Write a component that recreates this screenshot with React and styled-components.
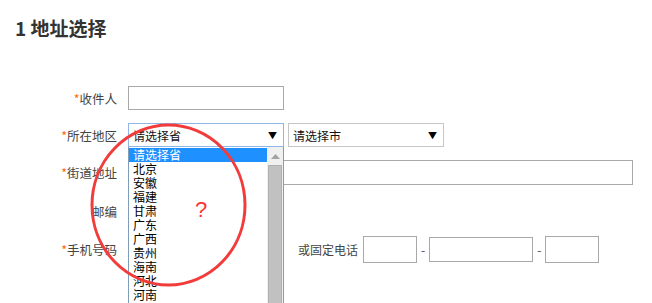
import React from "react";
import styled, { createGlobalStyle } from "styled-components";

const GlobalStyle = createGlobalStyle`
  html, body {
    margin: 0;
    padding: 0;
    background: #fff;
    overflow: hidden;
  }
  body {
    font-family: "Noto Sans CJK SC", "Liberation Sans", sans-serif;
    color: #333;
  }
`;

const provinces = [
  "请选择省",
  "北京",
  "安徽",
  "福建",
  "甘肃",
  "广东",
  "广西",
  "贵州",
  "海南",
  "河北",
  "河南",
];

const Page = styled.div`
  position: relative;
  height: 303px;
  overflow: hidden;
  padding: 0 0 0 15px;
`;

const Title = styled.h3`
  margin: 0;
  padding-top: 15px;
  height: 30px;
  font-size: 19px;
  line-height: 26px;
  font-weight: bold;
  color: #333;
`;

const Form = styled.div`
  padding-top: 41px;
`;

const Row = styled.div`
  display: flex;
  align-items: center;
  height: ${(p) => p.$h}px;
  margin-bottom: ${(p) => p.$mb}px;
`;

const Label = styled.label`
  width: 102px;
  margin-right: 11px;
  text-align: right;
  font-size: 12.5px;
  color: #444;
  white-space: nowrap;
`;

const Star = styled.span`
  color: #f60;
`;

const Input = styled.div`
  box-sizing: border-box;
  width: ${(p) => p.$w}px;
  height: ${(p) => p.$h || 25}px;
  border: 1px solid #a9a9a9;
  background: #fff;
`;

const SelectWrap = styled.div`
  position: relative;
  margin-right: ${(p) => p.$mr || 0}px;
`;

const Select = styled.div`
  box-sizing: border-box;
  width: 156px;
  height: 24px;
  display: flex;
  align-items: center;
  justify-content: space-between;
  padding: 0 6px 0 4px;
  border: 1px solid ${(p) => (p.$focus ? "#8fb6e4" : "#c6c6c6")};
  background: #fff;
  font-size: 12px;
  color: #111;
`;

const Arrow = styled.span`
  font-size: 9px;
  color: #000;
`;

const DropList = styled.div`
  position: absolute;
  left: 0;
  top: 24px;
  z-index: 5;
  box-sizing: border-box;
  width: 156px;
  height: 170px;
  display: flex;
  border: 1px solid #7f9db9;
  border-top: none;
  background: #fff;
`;

const Options = styled.ul`
  flex: 1;
  margin: 0;
  padding: 1px 0 0;
  list-style: none;
`;

const Option = styled.li`
  height: 14px;
  line-height: 14px;
  padding-left: 4px;
  font-size: 12px;
  color: ${(p) => (p.$active ? "#fff" : "#000")};
  background: ${(p) => (p.$active ? "#1e90ff" : "transparent")};
`;

const ScrollBar = styled.div`
  width: 16px;
  background: #f0f0f0;
  display: flex;
  flex-direction: column;
  align-items: center;
`;

const ScrollUp = styled.div`
  height: 18px;
  width: 16px;
  display: flex;
  align-items: center;
  justify-content: center;
`;

const Thumb = styled.div`
  box-sizing: border-box;
  width: 14px;
  flex: 1;
  background: #c1c1c1;
  border: 1px solid #b0b0b0;
`;

const Text = styled.span`
  font-size: 12px;
  color: #444;
  margin: 0 ${(p) => p.$mr || 0}px 0 ${(p) => p.$ml || 0}px;
`;

const Dash = styled.span`
  font-size: 12px;
  color: #444;
  margin: 0 4px;
`;

const Annotation = styled.svg`
  position: absolute;
  left: 0;
  top: 0;
  z-index: 10;
  pointer-events: none;
`;

function Required({ children }) {
  return (
    <Label>
      <Star>*</Star>
      {children}
    </Label>
  );
}

export default function App() {
  return (
    <>
      <GlobalStyle />
      <Page>
        <Title>1 地址选择</Title>
        <Form>
          <Row $h={24} $mb={13}>
            <Required>收件人</Required>
            <Input $w={156} $h={24} />
          </Row>
          <Row $h={24} $mb={13}>
            <Required>所在地区</Required>
            <SelectWrap $mr={4}>
              <Select $focus>
                请选择省<Arrow>▼</Arrow>
              </Select>
              <DropList>
                <Options>
                  {provinces.map((p, i) => (
                    <Option key={p} $active={i === 0}>
                      {p}
                    </Option>
                  ))}
                </Options>
                <ScrollBar>
                  <ScrollUp>
                    <svg width="9" height="5" viewBox="0 0 9 5">
                      <path d="M0 5 L4.5 0 L9 5 Z" fill="#a3a3a3" />
                    </svg>
                  </ScrollUp>
                  <Thumb />
                </ScrollBar>
              </DropList>
            </SelectWrap>
            <Select>
              请选择市<Arrow>▼</Arrow>
            </Select>
          </Row>
          <Row $h={25} $mb={13}>
            <Required>街道地址</Required>
            <Input $w={505} />
          </Row>
          <Row $h={26} $mb={12}>
            <Label>邮编</Label>
            <Input $w={156} />
          </Row>
          <Row $h={27} $mb={0}>
            <Required>手机号码</Required>
            <Input $w={156} />
            <Text $ml={14} $mr={5}>或固定电话</Text>
            <Input $w={54} $h={27} />
            <Dash>-</Dash>
            <Input $w={104} />
            <Dash>-</Dash>
            <Input $w={54} $h={27} />
          </Row>
        </Form>
        <Annotation width="652" height="303" viewBox="0 0 652 303">
          <ellipse
            cx="168.5"
            cy="205"
            rx="76.5"
            ry="80"
            fill="none"
            stroke="#f23c3c"
            strokeWidth="3"
          />
          <text
            x="201"
            y="217"
            textAnchor="middle"
            fontSize="22"
            fontFamily="Liberation Sans, sans-serif"
            fill="#f33"
          >
            ?
          </text>
        </Annotation>
      </Page>
    </>
  );
}
